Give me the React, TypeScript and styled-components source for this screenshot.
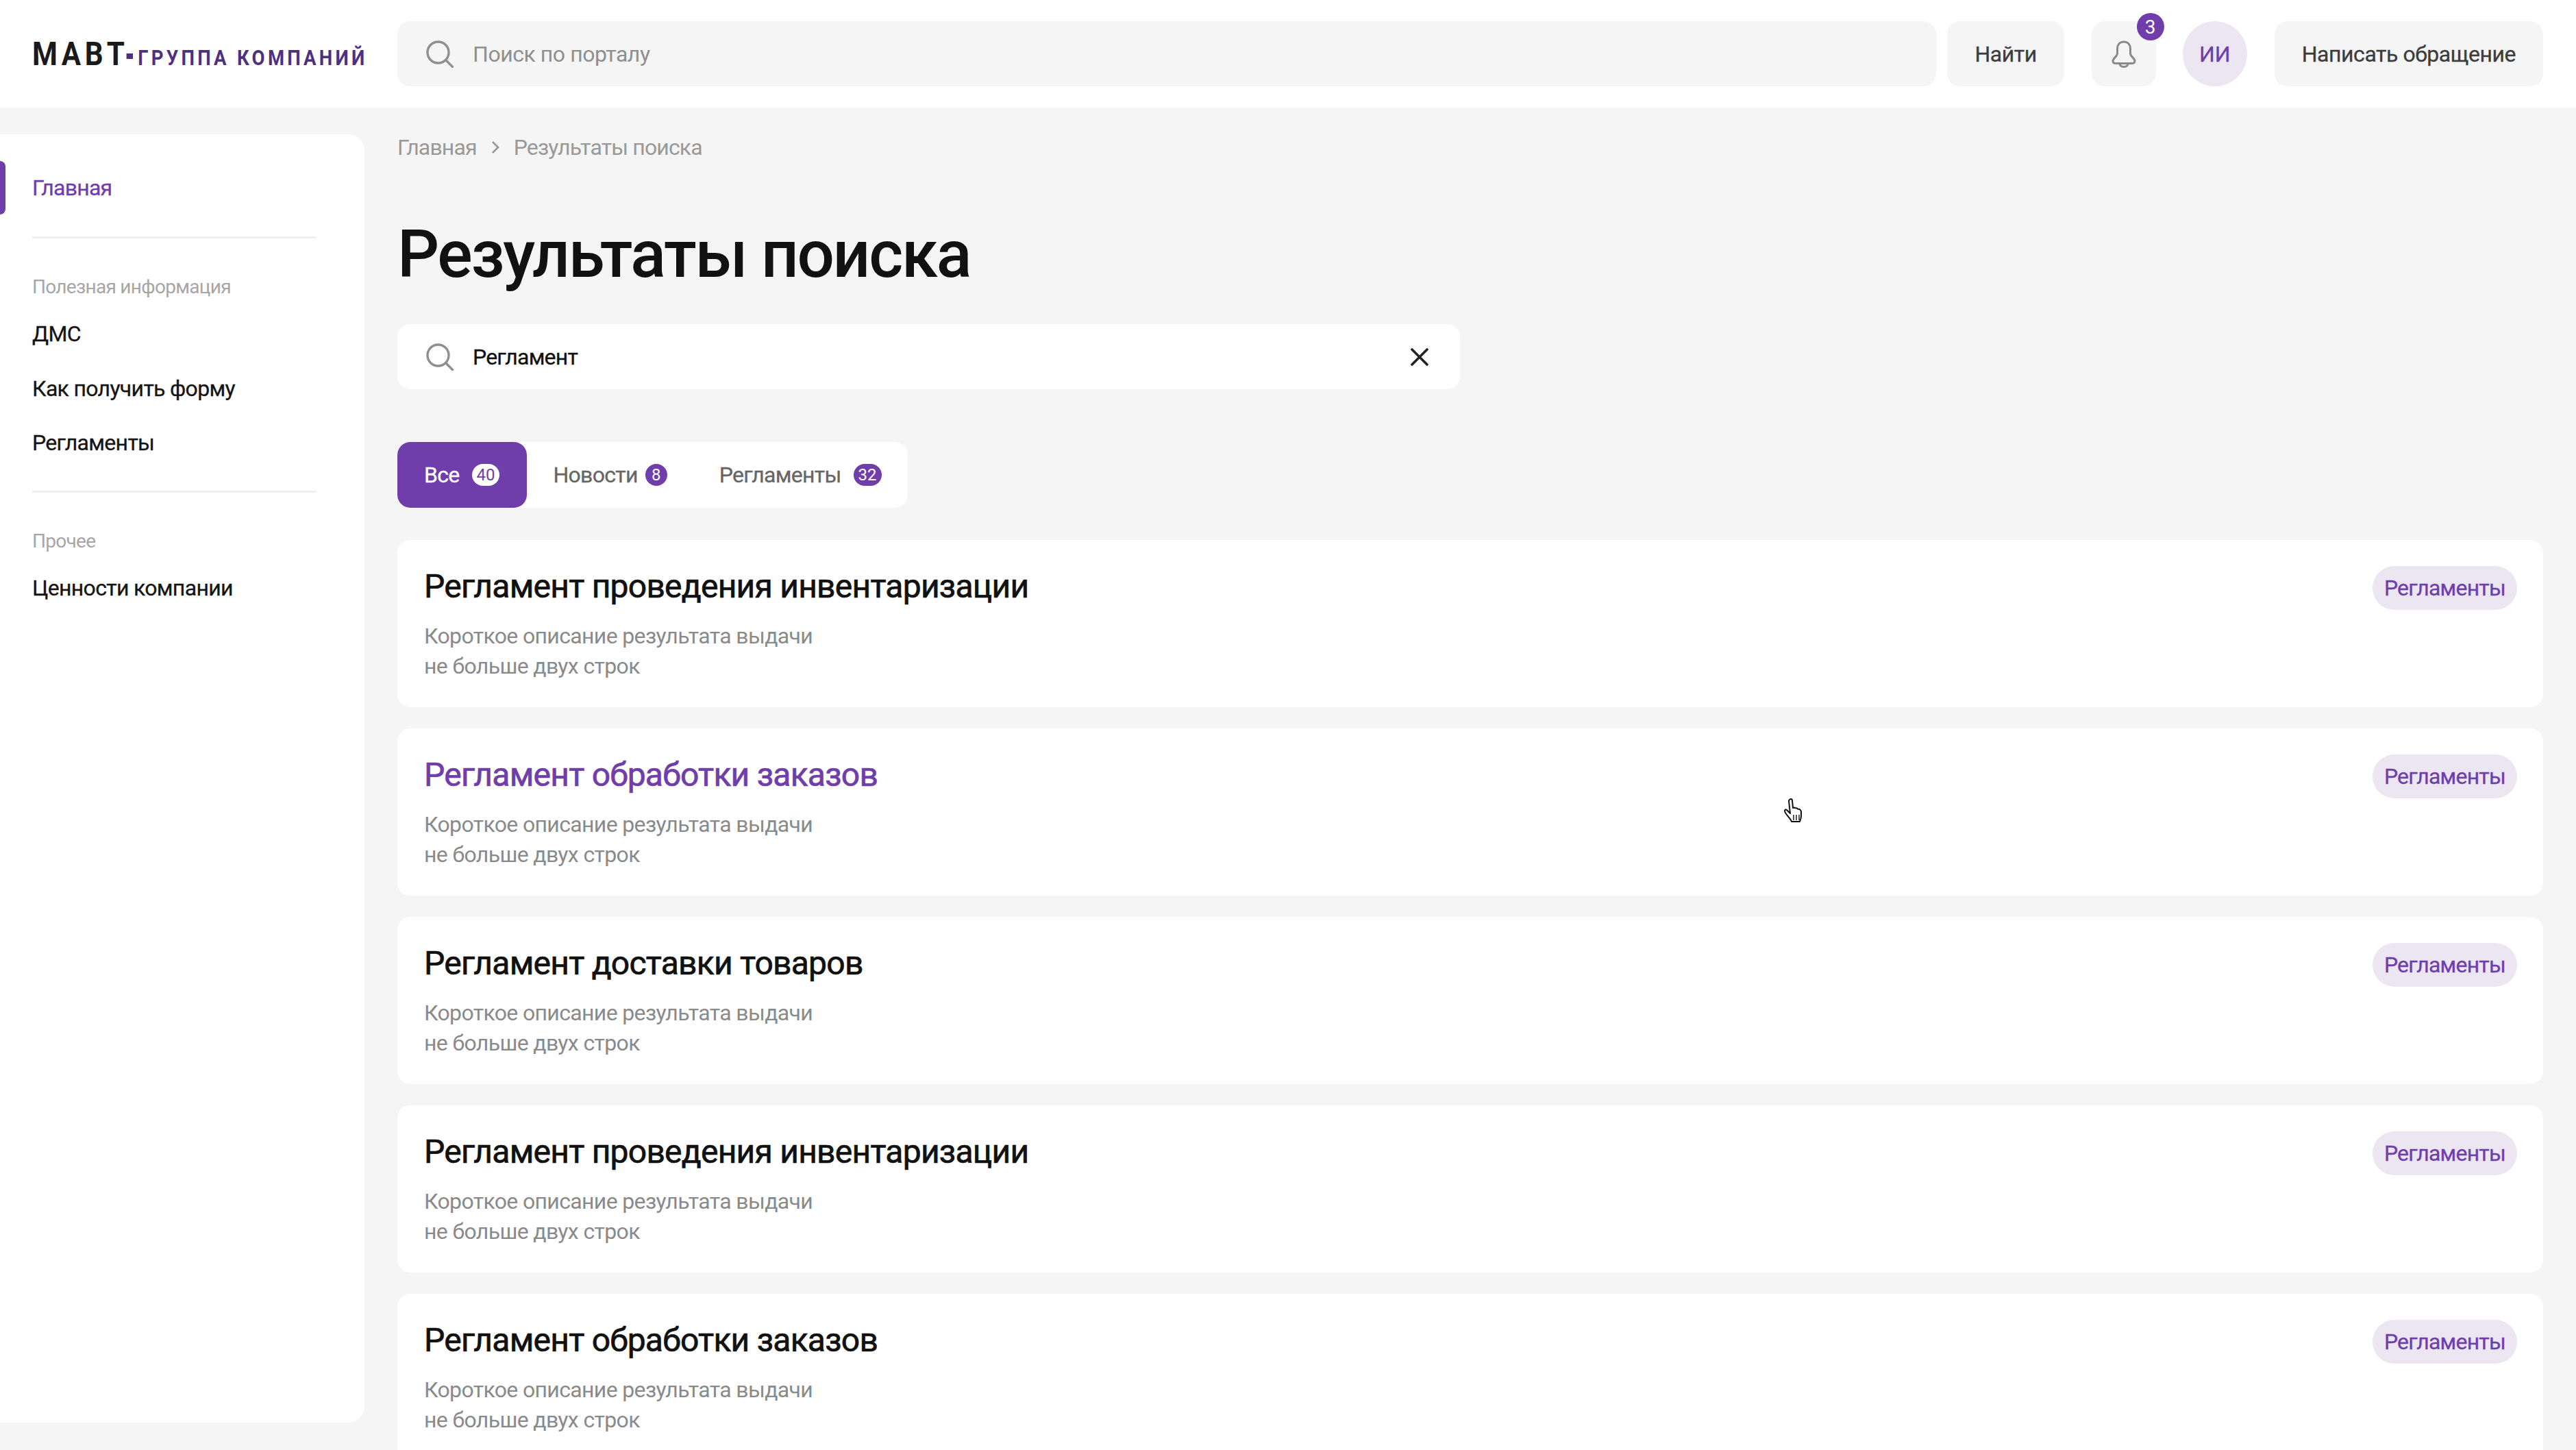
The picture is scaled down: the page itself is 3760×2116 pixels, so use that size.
import React from 'react'
import styled, { createGlobalStyle } from 'styled-components'

const purple = '#6f3eaa'
const pageGrey = '#f5f5f5'

const GlobalStyle = createGlobalStyle`
  html, body {
    margin: 0;
    padding: 0;
    background: ${pageGrey};
    overflow: hidden;
  }
  * { box-sizing: border-box; }
  body {
    font-family: Roboto, "Noto Sans", sans-serif;
    color: #111;
  }
`

const Page = styled.div`
  position: relative;
  width: 3760px;
  height: 2116px;
  overflow: hidden;
  display: flex;
  flex-direction: column;
`

const Header = styled.header`
  flex: none;
  height: 157px;
  background: #fff;
  display: flex;
  align-items: flex-start;
  padding: 31px 48px 0 47px;
`

const Logo = styled.div`
  flex: none;
  width: 533px;
  height: 95px;
`

const LogoInner = styled.div`
  display: inline-flex;
  align-items: baseline;
  white-space: nowrap;
  font-family: Roboto, sans-serif;
  font-weight: 700;
  transform: scaleX(0.86);
  transform-origin: 0 0;
  padding-top: 19px;
`

const LogoMain = styled.span`
  font-size: 49px;
  letter-spacing: 6.5px;
  color: #1a1a1a;
`

const LogoDot = styled.span`
  width: 11px;
  height: 8px;
  margin: 0 8px 0 -3px;
  background: #4f2f80;
  transform: translateY(-9px);
`

const LogoSub = styled.span`
  font-size: 32px;
  letter-spacing: 5px;
  color: #4f2f80;
`

const TopSearch = styled.div`
  flex: 1;
  height: 95px;
  background: ${pageGrey};
  border-radius: 19px;
  display: flex;
  align-items: center;
  gap: 28px;
  padding-left: 42px;
  color: #8f8f8f;
  font-size: 32px;
  letter-spacing: -0.45px;
`

const TopButton = styled.div`
  flex: none;
  height: 95px;
  padding: 0 40px;
  border-radius: 19px;
  background: ${pageGrey};
  color: #3c3c3c;
  font-size: 32px;
  letter-spacing: -0.45px;
  -webkit-text-stroke: 0.3px currentColor;
  display: flex;
  align-items: center;
  margin-left: ${p => p.$gap}px;
`

const BellBox = styled.div`
  position: relative;
  flex: none;
  width: 94px;
  height: 95px;
  margin-left: 40px;
  background: ${pageGrey};
  border-radius: 19px;
  display: flex;
  align-items: center;
  justify-content: center;
`

const BellCount = styled.span`
  position: absolute;
  top: -12px;
  right: -12px;
  width: 40px;
  height: 40px;
  border-radius: 50%;
  background: ${purple};
  color: #fff;
  font-size: 28px;
  display: flex;
  align-items: center;
  justify-content: center;
`

const Avatar = styled.div`
  flex: none;
  width: 94px;
  height: 95px;
  margin-left: 39px;
  border-radius: 50%;
  background: #ece6f3;
  color: ${purple};
  font-size: 32px;
  -webkit-text-stroke: 0.3px currentColor;
  display: flex;
  align-items: center;
  justify-content: center;
`

const Body = styled.div`
  flex: 1;
  display: flex;
  min-height: 0;
`

const Sidebar = styled.aside`
  flex: none;
  width: 532px;
  height: 1880px;
  margin-top: 39px;
  padding-top: 39px;
  background: #fff;
  border-radius: 0 24px 24px 0;
`

const ActiveItem = styled.div`
  height: 78px;
  padding-left: 47px;
  display: flex;
  align-items: center;
  position: relative;
  color: ${purple};
  font-size: 32px;
  letter-spacing: -0.75px;
  -webkit-text-stroke: 0.3px currentColor;
  &::before {
    content: '';
    position: absolute;
    left: 0;
    top: 0;
    width: 8px;
    height: 78px;
    background: ${purple};
    border-radius: 0 8px 8px 0;
  }
`

const Divider = styled.div`
  width: 415px;
  height: 3px;
  margin: ${p => p.$top}px 0 0 47px;
  background: #f0f0f0;
`

const SideCaption = styled.div`
  margin-top: ${p => p.$top}px;
  padding-left: 47px;
  height: 36px;
  line-height: 36px;
  color: #a6a6a6;
  font-size: 28px;
  letter-spacing: -0.7px;
`

const SideList = styled.div`
  margin-top: 30px;
  display: flex;
  flex-direction: column;
  gap: 39.5px;
`

const SideLink = styled.div`
  padding-left: 47px;
  height: 40px;
  line-height: 40px;
  color: #151515;
  font-size: 32px;
  letter-spacing: -0.68px;
  -webkit-text-stroke: 0.3px currentColor;
`

const Main = styled.main`
  flex: 1;
  min-width: 0;
  padding: 0 48px;
`

const Crumbs = styled.nav`
  margin-top: 38px;
  height: 40px;
  display: flex;
  align-items: center;
  gap: 20px;
  color: #999;
  font-size: 32px;
  letter-spacing: -0.85px;
`

const PageTitle = styled.h1`
  margin: 78px 0 0;
  height: 116px;
  line-height: 116px;
  font-size: 96px;
  font-weight: 500;
  letter-spacing: -2.3px;
  color: #111;
`

const QueryBox = styled.div`
  width: 1551px;
  height: 95px;
  margin-top: 44px;
  background: #fff;
  border-radius: 19px;
  display: flex;
  align-items: center;
  gap: 28px;
  padding: 0 45px 0 42px;
  font-size: 32px;
  letter-spacing: -0.8px;
  color: #111;
`

const QueryText = styled.span`
  flex: 1;
  -webkit-text-stroke: 0.3px currentColor;
`

const Tabs = styled.div`
  width: 745px;
  height: 96px;
  margin-top: 77px;
  background: #fff;
  border-radius: 19px;
  display: flex;
`

const Tab = styled.div`
  height: 96px;
  padding: 0 ${p => (p.$active ? 40 : 38)}px 0 ${p => (p.$active ? 39 : 38)}px;
  border-radius: 19px;
  display: flex;
  align-items: center;
  gap: ${p => p.$gap}px;
  background: ${p => (p.$active ? purple : 'transparent')};
  color: ${p => (p.$active ? '#fff' : '#666')};
  font-size: 32px;
  letter-spacing: -0.72px;
  -webkit-text-stroke: 0.3px currentColor;
`

const TabCount = styled.span`
  min-width: 32px;
  height: 32px;
  padding: 0 7px;
  border-radius: 16px;
  background: ${p => (p.$active ? '#fff' : purple)};
  color: ${p => (p.$active ? purple : '#fff')};
  font-size: 24px;
  letter-spacing: 0;
  -webkit-text-stroke: 0;
  display: flex;
  align-items: center;
  justify-content: center;
`

const Results = styled.div`
  margin-top: 47px;
  display: flex;
  flex-direction: column;
  gap: 31px;
`

const Card = styled.article`
  flex: none;
  position: relative;
  height: 244px;
  padding: 39px 38px 0 39px;
  background: #fff;
  border-radius: 19px;
  display: flex;
  justify-content: space-between;
  align-items: flex-start;
`

const CardTitle = styled.div`
  height: 58px;
  line-height: 58px;
  font-size: 48px;
  letter-spacing: -0.76px;
  -webkit-text-stroke: 0.7px currentColor;
  color: ${p => (p.$hover ? purple : '#111')};
`

const CardText = styled.p`
  margin: 21px 0 0;
  line-height: 44px;
  font-size: 32px;
  letter-spacing: -0.65px;
  color: #8a8a8a;
`

const Tag = styled.span`
  flex: none;
  height: 64px;
  margin-top: -1px;
  padding: 0 17px;
  border-radius: 32px;
  background: #ece6f3;
  color: ${purple};
  font-size: 32px;
  letter-spacing: -0.8px;
  -webkit-text-stroke: 0.3px currentColor;
  display: flex;
  align-items: center;
`

const Cursor = styled.svg`
  position: absolute;
  left: 2603px;
  top: 1164px;
  width: 34px;
  height: 38px;
`

const SearchIcon = () => (
  <svg width="40" height="40" viewBox="0 0 40 40" fill="none" stroke="#8f8f8f" strokeWidth="3.4" strokeLinecap="round">
    <circle cx="17.5" cy="17.5" r="15.5" />
    <path d="M28.5 28.5 38.5 38.5" />
  </svg>
)

const CloseIcon = () => (
  <svg width="28" height="28" viewBox="0 0 28 28" fill="none" stroke="#222" strokeWidth="3.6" strokeLinecap="round">
    <path d="M3 3 25 25M25 3 3 25" />
  </svg>
)

const BellIcon = () => (
  <svg width="36" height="40" viewBox="0 0 36 40" fill="none" stroke="#8a8a8a" strokeWidth="3" strokeLinejoin="round">
    <path d="M18 2c-6.300 0-9.500 4.700-9.500 10.500v6.500c0 4.500-6.500 7-6.500 11 0 2.500 2 3.500 4.500 3.500h23c2.500 0 4.500-1 4.500-3.500 0-4-6.500-6.500-6.500-11v-6.500C27.500 6.700 24.300 2 18 2Z" />
    <path d="M12 33.500c0 3.500 2.500 5 6 5s6-1.500 6-5" />
  </svg>
)

const results = [
  'Регламент проведения инвентаризации',
  'Регламент обработки заказов',
  'Регламент доставки товаров',
  'Регламент проведения инвентаризации',
  'Регламент обработки заказов',
]

const App = () => (
  <>
    <GlobalStyle />
    <Page>
      <Header>
        <Logo>
          <LogoInner>
            <LogoMain>МАВТ</LogoMain>
            <LogoDot />
            <LogoSub>ГРУППА КОМПАНИЙ</LogoSub>
          </LogoInner>
        </Logo>
        <TopSearch>
          <SearchIcon />
          Поиск по порталу
        </TopSearch>
        <TopButton $gap={16}>Найти</TopButton>
        <BellBox>
          <BellIcon />
          <BellCount>3</BellCount>
        </BellBox>
        <Avatar>ИИ</Avatar>
        <TopButton $gap={40}>Написать обращение</TopButton>
      </Header>
      <Body>
        <Sidebar>
          <ActiveItem>Главная</ActiveItem>
          <Divider $top={32} />
          <SideCaption $top={53}>Полезная информация</SideCaption>
          <SideList>
            <SideLink>ДМС</SideLink>
            <SideLink>Как получить форму</SideLink>
            <SideLink>Регламенты</SideLink>
          </SideList>
          <Divider $top={50} />
          <SideCaption $top={53}>Прочее</SideCaption>
          <SideList>
            <SideLink>Ценности компании</SideLink>
          </SideList>
        </Sidebar>
        <Main>
          <Crumbs>
            <span>Главная</span>
            <svg width="14" height="22" viewBox="0 0 14 22" fill="none" stroke="#999" strokeWidth="2.6">
              <path d="M3 3l8 8-8 8" />
            </svg>
            <span>Результаты поиска</span>
          </Crumbs>
          <PageTitle>Результаты поиска</PageTitle>
          <QueryBox>
            <SearchIcon />
            <QueryText>Регламент</QueryText>
            <CloseIcon />
          </QueryBox>
          <Tabs>
            <Tab $active $gap={18}>
              Все<TabCount $active>40</TabCount>
            </Tab>
            <Tab $gap={11}>
              Новости<TabCount>8</TabCount>
            </Tab>
            <Tab $gap={18}>
              Регламенты<TabCount>32</TabCount>
            </Tab>
          </Tabs>
          <Results>
            {results.map((title, i) => (
              <Card key={i}>
                <div>
                  <CardTitle $hover={i === 1}>{title}</CardTitle>
                  <CardText>
                    Короткое описание результата выдачи
                    <br />
                    не больше двух строк
                  </CardText>
                </div>
                <Tag>Регламенты</Tag>
              </Card>
            ))}
          </Results>
        </Main>
      </Body>
      <Cursor viewBox="0 0 34 38" fill="#fff" stroke="#111" strokeWidth="2" strokeLinejoin="round">
        <path d="M9 3c1.500-2 4-1 4 1l1 11 2-.5 1 .5 3 .5 1 1 3 .5 2 3v7c0 3-1 5-2 8H12c-1-3-4-6-7-10-1.500-2-3-4-3-6 0-1.500 2-2 3-1l5 5L8 5c0-1 .5-1.500 1-2Z" />
        <path d="M15 25v8M19 25v8M23 25v8" fill="none" strokeWidth="1.400" />
      </Cursor>
    </Page>
  </>
)

export default App
